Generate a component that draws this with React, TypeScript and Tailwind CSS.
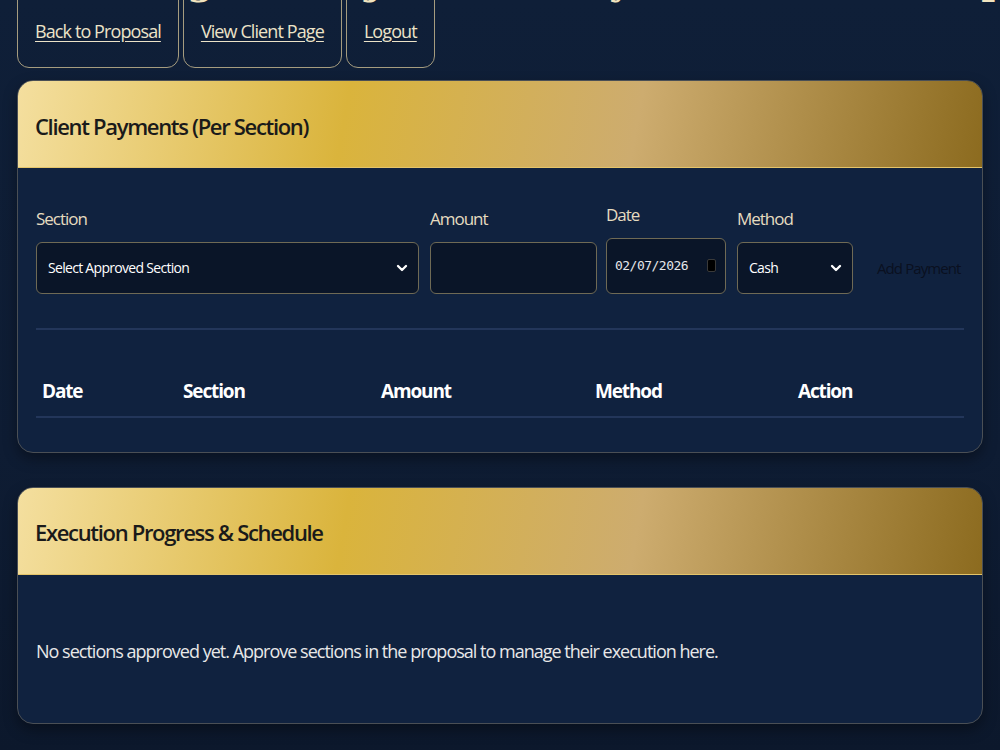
import { ChevronDown } from "lucide-react";

const navButtons = ["Back to Proposal", "View Client Page", "Logout"];

const columns = [
  { label: "Date", width: "w-[141px]" },
  { label: "Section", width: "w-[198px]" },
  { label: "Amount", width: "w-[214px]" },
  { label: "Method", width: "w-[203px]" },
  { label: "Action", width: "flex-1" },
];

function CardHeader({ title }: { title: string }) {
  return (
    <div className="flex h-[87px] items-center border-b border-[#e4c46a] bg-[linear-gradient(100deg,#f4df9f_0%,#dab43c_34%,#cdac6f_64%,#8c6b1f_100%)] px-[17px] pt-[4px]">
      <h2 className="text-[22px] font-semibold tracking-[-0.06em] text-[#1a1a1a]">{title}</h2>
    </div>
  );
}

function FakeSelect({ value, width }: { value: string; width: string }) {
  return (
    <div
      className={`flex h-[52px] ${width} items-center justify-between rounded-[6px] border-[1.5px] border-[#6f6a55] bg-[#0a1528] pl-[11px] pr-[8px] text-white`}
    >
      <span className="text-[14px] tracking-[-0.05em]">{value}</span>
      <ChevronDown className="h-4 w-4" strokeWidth={3.5} />
    </div>
  );
}

export default function App() {
  return (
    <div className="min-h-screen overflow-hidden bg-[#0e1c33] bg-[linear-gradient(180deg,#0f1f38_0%,#0e1c33_60%,#0c182c_100%)] font-['Open_Sans',sans-serif] text-[#ece3c8]">
      <header className="-mt-[44px] px-[17px]">
        <h1 className="h-[50px] whitespace-nowrap pl-[24px] font-['DejaVu_Serif',serif] text-[38px] leading-[50px] font-bold tracking-[0.18em] text-[#f1e4bf]">
          Manage Project • Payments & Scope
        </h1>
        <div className="-mt-[18px] flex gap-[4px]">
          {navButtons.map((label) => (
            <a
              key={label}
              href="#"
              className="flex h-[80px] items-end rounded-[12px] border-[1.5px] border-[#a59c7f] px-[17px] pb-[22px] text-[18px] tracking-[-0.05em] text-[#ece3c8] underline underline-offset-[3px]"
            >
              {label}
            </a>
          ))}
        </div>
      </header>

      <section className="mx-[17px] mt-[12px] overflow-hidden rounded-[16px] border border-[#4a4f55] bg-[#10223f] shadow-[0_6px_14px_rgba(0,0,0,0.35)]">
        <CardHeader title="Client Payments (Per Section)" />
        <div className="px-[18px] pb-[34px] pt-[34px]">
          <div className="flex items-end">
            <label className="flex flex-col">
              <span className="mb-[10px] text-[17px] tracking-[-0.06em] text-[#e6dcc0]">Section</span>
              <FakeSelect value="Select Approved Section" width="w-[383px]" />
            </label>
            <label className="ml-[11px] flex flex-col">
              <span className="mb-[10px] text-[17px] tracking-[-0.06em] text-[#e6dcc0]">Amount</span>
              <div className="h-[52px] w-[167px] rounded-[6px] border-[1.5px] border-[#6f6a55] bg-[#0a1528]" />
            </label>
            <label className="ml-[9px] flex flex-col">
              <span className="mb-[10px] text-[17px] tracking-[-0.06em] text-[#e6dcc0]">Date</span>
              <div className="flex h-[56px] w-[120px] items-center justify-between rounded-[6px] border-[1.5px] border-[#6f6a55] bg-[#0a1528] pl-[8px] pr-[9px]">
                <span className="font-['DejaVu_Sans_Mono',monospace] text-[13px] tracking-[-0.04em] text-[#e5e7eb]">
                  02/07/2026
                </span>
                <span className="h-[13px] w-[9px] rounded-[2px] border border-[#3a3a3a] bg-black" />
              </div>
            </label>
            <label className="ml-[11px] flex flex-col">
              <span className="mb-[10px] text-[17px] tracking-[-0.06em] text-[#e6dcc0]">Method</span>
              <FakeSelect value="Cash" width="w-[116px]" />
            </label>
            <button type="button" className="mb-[14px] ml-[24px] text-[15px] tracking-[-0.06em] text-[#0a1020]">
              Add Payment
            </button>
          </div>

          <div className="mt-[34px] h-[2px] bg-[#23365a]" />

          <div className="mt-[38px] flex h-[50px] items-center border-b-2 border-[#23365a] px-[6px]">
            {columns.map((col) => (
              <span key={col.label} className={`${col.width} text-[19px] font-bold tracking-[-0.06em] text-white`}>
                {col.label}
              </span>
            ))}
          </div>
        </div>
      </section>

      <section className="mx-[17px] mt-[34px] mb-[28px] overflow-hidden rounded-[16px] border border-[#4a4f55] bg-[#10223f] shadow-[0_6px_14px_rgba(0,0,0,0.35)]">
        <CardHeader title="Execution Progress & Schedule" />
        <div className="px-[18px] pb-[60px] pt-[64px]">
          <p className="text-[18px] leading-[24px] tracking-[-0.055em] text-[#e8e8e8]">
            No sections approved yet. Approve sections in the proposal to manage their execution here.
          </p>
        </div>
      </section>
    </div>
  );
}
